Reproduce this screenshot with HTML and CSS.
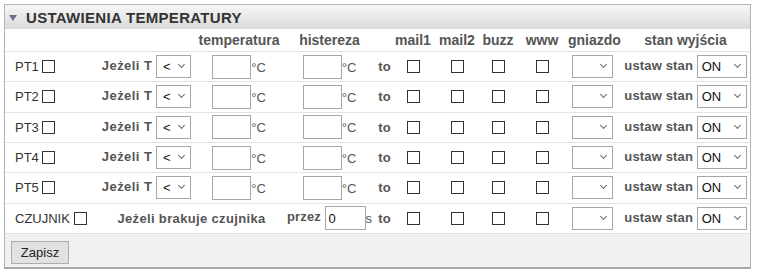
FILE: index.html
```html
<!DOCTYPE html>
<html lang="pl">
<head>
<meta charset="utf-8">
<title>Ustawienia temperatury</title>
<link rel="stylesheet" href="styles.css">
</head>
<body>
<div class="panel">
  <div class="panel-head">
    <span class="tri"></span>
    <span class="title">USTAWIENIA TEMPERATURY</span>
  </div>
  <table class="grid">
    <colgroup>
      <col class="c1"><col class="c2"><col class="c3"><col class="c4"><col class="c5"><col class="c6"><col class="c7"><col class="c8"><col class="c9"><col class="c10"><col class="c11">
    </colgroup>
    <thead>
      <tr class="hrow">
        <th></th><th></th><th>temperatura</th><th>histereza</th><th></th><th>mail1</th><th>mail2</th><th>buzz</th><th>www</th><th>gniazdo</th><th class="stan">stan wyjścia</th>
      </tr>
    </thead>
    <tbody>
      <tr>
        <td class="name">PT1 <span class="cb"></span></td>
        <td class="cond"><span class="lbl">Jeżeli T</span> <span class="sel op">&lt;</span></td>
        <td><span class="inp"></span><span class="unit">°C</span></td>
        <td><span class="inp"></span><span class="unit">°C</span></td>
        <td class="lbl">to</td>
        <td><span class="cb"></span></td><td><span class="cb"></span></td><td><span class="cb"></span></td><td><span class="cb"></span></td>
        <td><span class="sel gn"></span></td>
        <td class="stan"><span class="lbl">ustaw stan</span> <span class="sel on">ON</span></td>
      </tr>
      <tr>
        <td class="name">PT2 <span class="cb"></span></td>
        <td class="cond"><span class="lbl">Jeżeli T</span> <span class="sel op">&lt;</span></td>
        <td><span class="inp"></span><span class="unit">°C</span></td>
        <td><span class="inp"></span><span class="unit">°C</span></td>
        <td class="lbl">to</td>
        <td><span class="cb"></span></td><td><span class="cb"></span></td><td><span class="cb"></span></td><td><span class="cb"></span></td>
        <td><span class="sel gn"></span></td>
        <td class="stan"><span class="lbl">ustaw stan</span> <span class="sel on">ON</span></td>
      </tr>
      <tr>
        <td class="name">PT3 <span class="cb"></span></td>
        <td class="cond"><span class="lbl">Jeżeli T</span> <span class="sel op">&lt;</span></td>
        <td><span class="inp"></span><span class="unit">°C</span></td>
        <td><span class="inp"></span><span class="unit">°C</span></td>
        <td class="lbl">to</td>
        <td><span class="cb"></span></td><td><span class="cb"></span></td><td><span class="cb"></span></td><td><span class="cb"></span></td>
        <td><span class="sel gn"></span></td>
        <td class="stan"><span class="lbl">ustaw stan</span> <span class="sel on">ON</span></td>
      </tr>
      <tr>
        <td class="name">PT4 <span class="cb"></span></td>
        <td class="cond"><span class="lbl">Jeżeli T</span> <span class="sel op">&lt;</span></td>
        <td><span class="inp"></span><span class="unit">°C</span></td>
        <td><span class="inp"></span><span class="unit">°C</span></td>
        <td class="lbl">to</td>
        <td><span class="cb"></span></td><td><span class="cb"></span></td><td><span class="cb"></span></td><td><span class="cb"></span></td>
        <td><span class="sel gn"></span></td>
        <td class="stan"><span class="lbl">ustaw stan</span> <span class="sel on">ON</span></td>
      </tr>
      <tr>
        <td class="name">PT5 <span class="cb"></span></td>
        <td class="cond"><span class="lbl">Jeżeli T</span> <span class="sel op">&lt;</span></td>
        <td><span class="inp"></span><span class="unit">°C</span></td>
        <td><span class="inp"></span><span class="unit">°C</span></td>
        <td class="lbl">to</td>
        <td><span class="cb"></span></td><td><span class="cb"></span></td><td><span class="cb"></span></td><td><span class="cb"></span></td>
        <td><span class="sel gn"></span></td>
        <td class="stan"><span class="lbl">ustaw stan</span> <span class="sel on">ON</span></td>
      </tr>
      <tr>
        <td class="name">CZUJNIK <span class="cb"></span></td>
        <td colspan="2" class="lbl missing">Jeżeli brakuje czujnika</td>
        <td class="przez"><span class="lbl">przez</span> <span class="inp val">0</span><span class="unit">s</span></td>
        <td class="lbl">to</td>
        <td><span class="cb"></span></td><td><span class="cb"></span></td><td><span class="cb"></span></td><td><span class="cb"></span></td>
        <td><span class="sel gn"></span></td>
        <td class="stan"><span class="lbl">ustaw stan</span> <span class="sel on">ON</span></td>
      </tr>
    </tbody>
  </table>
  <div class="panel-foot">
    <button class="btn" type="button">Zapisz</button>
  </div>
</div>
</body>
</html>
```

FILE: styles.css
```css
html, body {
  margin: 0;
  padding: 0;
  background: #ffffff;
}

body {
  font-family: "Liberation Sans", Arial, sans-serif;
  font-size: 13px;
  color: #333333;
}

.panel {
  box-sizing: border-box;
  width: 747px;
  height: 265px;
  margin: 4px 0 0 4px;
  border: 1px solid #b4b4b4;
  border-bottom: 2px solid #a8a8a8;
  background: #ffffff;
  display: flex;
  flex-direction: column;
}

.panel-head {
  height: 24px;
  flex: none;
  display: flex;
  align-items: center;
  padding-left: 0;
  background: linear-gradient(#f6f6f6, #dadada);
}

.tri {
  width: 0;
  height: 0;
  border-left: 4px solid transparent;
  border-right: 4px solid transparent;
  border-top: 6px solid #6e6e8c;
  margin: 1px 9px 0 4px;
}

.title {
  font-weight: bold;
  font-size: 15px;
  color: #333333;
  letter-spacing: 0.3px;
}

.grid {
  width: 745px;
  flex: none;
  table-layout: fixed;
  border-collapse: collapse;
}

.c1 { width: 88px; }
.c2 { width: 103px; }
.c3 { width: 86px; }
.c4 { width: 95px; }
.c5 { width: 15px; }
.c6 { width: 42px; }
.c7 { width: 46px; }
.c8 { width: 36px; }
.c9 { width: 52px; }
.c10 { width: 48px; }
.c11 { width: 134px; }

.grid th,
.grid td {
  padding: 0;
  text-align: center;
  white-space: nowrap;
  vertical-align: middle;
}

.hrow th {
  height: 22px;
  font-weight: bold;
  color: #555555;
  font-size: 14px;
}

.grid tbody tr {
  border-top: 1px solid #e4e4e4;
}

.grid tbody td {
  height: 29.33px;
}

.grid td.name {
  text-align: left;
  padding-left: 10px;
  color: #333333;
}

.grid td.cond {
  text-align: right;
  padding-right: 5px;
}

.grid td.cond .lbl {
  letter-spacing: 0.45px;
}

.grid .stan {
  padding-left: 5px;
}

.lbl {
  font-weight: bold;
  color: #555555;
  letter-spacing: 0.15px;
}

.grid td.missing {
  padding-left: 8px;
  letter-spacing: 0.35px;
}

.cb {
  display: inline-block;
  box-sizing: border-box;
  width: 13px;
  height: 13px;
  border: 1px solid #333333;
  background: #ffffff;
  vertical-align: -2px;
}

.inp {
  display: inline-block;
  box-sizing: border-box;
  width: 39px;
  height: 24px;
  border: 1px solid #a6a6a6;
  background: #ffffff;
  vertical-align: middle;
  text-align: left;
  padding: 4px 0 0 3px;
  color: #111111;
}

.inp.val {
  width: 41px;
  font-weight: normal;
  letter-spacing: 0;
}

.unit {
  color: #555555;
  vertical-align: -2px;
}

.sel {
  position: relative;
  display: inline-block;
  box-sizing: border-box;
  height: 23px;
  border: 1px solid #a6a6a6;
  background: #ffffff;
  vertical-align: middle;
  text-align: left;
  padding: 3px 0 0 6px;
  color: #111111;
  font-weight: normal;
  letter-spacing: 0;
}

.sel::after {
  content: "";
  position: absolute;
  right: 6px;
  top: 6px;
  width: 4px;
  height: 4px;
  border-right: 1px solid #6a6a6a;
  border-bottom: 1px solid #6a6a6a;
  transform: rotate(45deg);
}

.sel.op { width: 35px; }
.sel.gn { width: 41px; }
.sel.on { width: 50px; padding-left: 4px; }

.panel-foot {
  flex: 1;
  border-top: 1px solid #e2e2e2;
  background: #f1f1f1;
  padding: 7px 0 0 6px;
}

.btn {
  box-sizing: border-box;
  width: 58px;
  height: 23px;
  border: 1px solid #adadad;
  background: #e1e1e1;
  font-family: "Liberation Sans", Arial, sans-serif;
  font-size: 13px;
  color: #222222;
  padding: 0;
  border-radius: 0;
}
```
